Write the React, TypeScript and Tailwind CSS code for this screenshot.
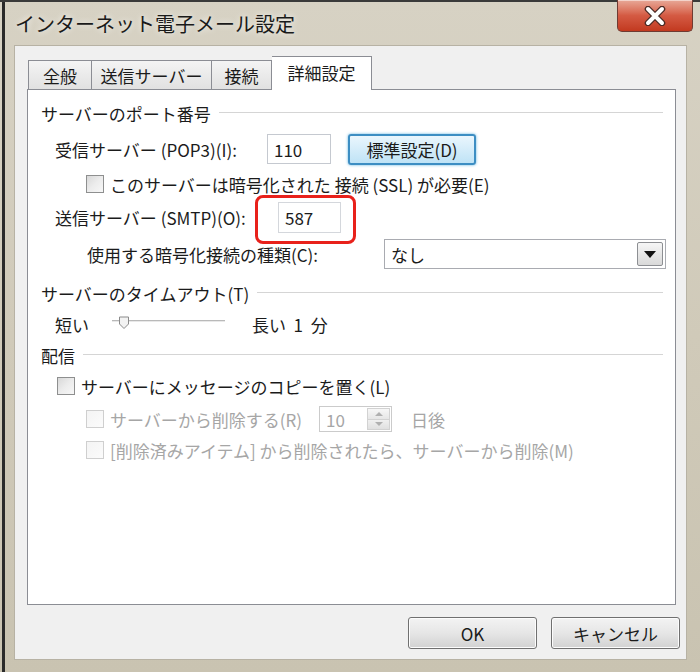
import React from "react";

const Checkbox: React.FC<{ disabled?: boolean }> = ({ disabled = false }) => (
  <span
    className={`inline-block w-[18px] h-[18px] border shrink-0 ${
      disabled
        ? "border-[#cfcfcf] bg-gradient-to-br from-[#f4f4f4] to-[#fbfbfb]"
        : "border-[#8e8f8f] bg-gradient-to-br from-[#d8d8d8] via-[#ececec] to-[#f7f7f7]"
    }`}
  />
);

const SectionHeader: React.FC<{ title: string; className?: string }> = ({ title, className = "" }) => (
  <div className={`flex items-center h-[24px] pl-[13px] pr-[12px] ${className}`}>
    <span className="whitespace-nowrap">{title}</span>
    <span className="flex-1 ml-[8px] h-[2px] border-t border-[#d5d5d5] border-b-white" />
  </div>
);

export default function App() {
  return (
    <div className="w-[700px] h-[672px] overflow-hidden bg-gradient-to-b from-[#d7d2c4] via-[#d0cab9] to-[#c9c3b1] relative font-['Meiryo_UI','Noto_Sans_CJK_JP',sans-serif] text-[#1b1b1b] text-[17px] leading-none">
      {/* left dark edge */}
      <div className="absolute left-[2px] top-0 bottom-0 w-[3px] bg-[#2a2a2a]" />
      <div className="absolute left-0 right-0 top-0 h-[2px] bg-[#3a3a3a]" />

      {/* Title bar */}
      <div className="h-[45px] flex items-center pl-[15px] pt-[2px]">
        <span className="text-[20px] text-[#1a1a1a] [text-shadow:0_0_6px_rgba(255,255,255,0.9)]">
          インターネット電子メール設定
        </span>
      </div>

      {/* Close button */}
      <div className="absolute top-0 left-[617px] w-[76px] h-[32px] rounded-b-[5px] border border-[#6e3b33] border-t-0 bg-gradient-to-b from-[#e7a898] via-[#d45a43] to-[#c2391f] flex items-center justify-center shadow-[inset_0_1px_0_rgba(255,255,255,0.5)]">
        <svg width="24" height="20" viewBox="0 0 24 20">
          <path d="M5 3 L19 17 M19 3 L5 17" stroke="#4a2a25" strokeWidth="6.5" strokeLinecap="round" />
          <path d="M5 3 L19 17 M19 3 L5 17" stroke="#ffffff" strokeWidth="4" strokeLinecap="round" />
        </svg>
      </div>

      {/* Client area */}
      <div className="ml-[14px] mr-[13px] h-[615px] bg-[#f0f0f0] border border-[#b7b2a4] flex flex-col">
        {/* Tabs */}
        <div className="flex items-end pl-[13px] mt-[10px] h-[33px] relative z-10">
          <div className="w-[64px] h-[29px] border border-[#8b8d94] border-b-0 bg-gradient-to-b from-[#f4f4f4] to-[#e1e1e1] flex items-center justify-center">
            全般
          </div>
          <div className="w-[120px] h-[29px] border border-[#8b8d94] border-b-0 border-l-0 bg-gradient-to-b from-[#f4f4f4] to-[#e1e1e1] flex items-center justify-center">
            送信サーバー
          </div>
          <div className="w-[60px] h-[29px] border border-[#8b8d94] border-b-0 border-l-0 bg-gradient-to-b from-[#f4f4f4] to-[#e1e1e1] flex items-center justify-center">
            接続
          </div>
          <div className="w-[100px] h-[34px] -mb-[1px] border border-[#8b8d94] border-b-0 border-l-0 bg-white flex items-center justify-center pb-[3px]">
            詳細設定
          </div>
        </div>

        {/* Tab panel */}
        <div className="ml-[12px] mr-[10px] h-[516px] bg-white border border-[#8b8d94] relative">
          <SectionHeader title="サーバーのポート番号" className="mt-[11px]" />

          {/* POP3 */}
          <div className="flex items-center h-[32px] mt-[8px] pl-[27px]">
            <span className="w-[212px] whitespace-nowrap">受信サーバー (POP3)(I):</span>
            <div className="w-[64px] h-[30px] border border-[#c5c9d0] bg-white flex items-center pl-[6px]">110</div>
            <div className="ml-[17px] w-[128px] h-[31px] rounded-[3px] border-2 border-[#3d8ec3] bg-gradient-to-b from-[#eaf6fd] to-[#bfe3f6] shadow-[0_0_3px_#5fb2e0] flex items-center justify-center">
              標準設定(D)
            </div>
          </div>

          {/* SSL */}
          <div className="flex items-center h-[24px] mt-[7px] pl-[58px] gap-[6px]">
            <Checkbox />
            <span className="whitespace-nowrap">このサーバーは暗号化された 接続 (SSL) が必要(E)</span>
          </div>

          {/* SMTP */}
          <div className="flex items-center h-[31px] mt-[6px] pl-[27px]">
            <span className="w-[223px] whitespace-nowrap">送信サーバー (SMTP)(O):</span>
            <div className="w-[63px] h-[31px] border border-[#d4d7dc] bg-white flex items-center pl-[6px]">587</div>
          </div>
          <div className="absolute left-[227px] top-[105px] w-[101px] h-[49px] border-[3px] border-[#e8211b] rounded-[8px]" />

          {/* Encryption type */}
          <div className="flex items-center h-[30px] mt-[6px] pl-[59px]">
            <span className="w-[297px] whitespace-nowrap">使用する暗号化接続の種類(C):</span>
            <div className="w-[282px] h-[30px] border border-[#a9abb1] bg-white flex items-center justify-between pl-[6px] pr-[2px]">
              <span>なし</span>
              <div className="w-[26px] h-[24px] border border-[#8d8f93] rounded-[2px] bg-gradient-to-b from-[#f6f6f6] to-[#d9d9d9] flex items-center justify-center">
                <svg width="12" height="7" viewBox="0 0 12 7">
                  <path d="M0 0 H12 L6 7 Z" fill="#111" />
                </svg>
              </div>
            </div>
          </div>

          <SectionHeader title="サーバーのタイムアウト(T)" className="mt-[12px]" />

          {/* Timeout slider */}
          <div className="flex items-center h-[24px] mt-[7px] pl-[27px]">
            <span className="w-[57px]">短い</span>
            <div className="relative w-[113px] h-[24px]">
              <div className="absolute left-0 right-0 top-[8px] h-[3px] border-t border-[#b9b9b9] bg-[#e8e8e8] border-b border-b-white" />
              <svg className="absolute left-[6px] top-[4px]" width="12" height="14" viewBox="0 0 12 14">
                <path d="M1.5 1 H10.5 V8 L6 12.5 L1.5 8 Z" fill="#f3f3f3" stroke="#8b8b8b" strokeWidth="1" />
              </svg>
            </div>
            <span className="ml-[27px] whitespace-nowrap">長い&nbsp;&nbsp;1&nbsp;&nbsp;分</span>
          </div>

          <SectionHeader title="配信" className="mt-[7px]" />

          {/* Leave copy */}
          <div className="flex items-center h-[24px] mt-[7px] pl-[29px] gap-[6px]">
            <Checkbox />
            <span className="whitespace-nowrap">サーバーにメッセージのコピーを置く(L)</span>
          </div>

          {/* Remove after */}
          <div className="flex items-center h-[26px] mt-[8px] pl-[58px] text-[#a6a6a6]">
            <Checkbox disabled />
            <span className="ml-[6px] w-[209px] whitespace-nowrap">サーバーから削除する(R)</span>
            <div className="w-[73px] h-[26px] border border-[#cbcbcb] bg-white flex items-center justify-between pl-[6px] pr-[1px]">
              <span>10</span>
              <div className="w-[23px] h-[22px] border border-[#d2d2d2] flex flex-col">
                <div className="flex-1 bg-gradient-to-b from-[#f7f7f7] to-[#e6e6e6] flex items-center justify-center border-b border-[#d2d2d2]">
                  <svg width="8" height="4" viewBox="0 0 8 4"><path d="M0 4 L4 0 L8 4 Z" fill="#b0b0b0" /></svg>
                </div>
                <div className="flex-1 bg-gradient-to-b from-[#f0f0f0] to-[#e0e0e0] flex items-center justify-center">
                  <svg width="8" height="4" viewBox="0 0 8 4"><path d="M0 0 L8 0 L4 4 Z" fill="#b0b0b0" /></svg>
                </div>
              </div>
            </div>
            <span className="ml-[19px]">日後</span>
          </div>

          {/* Remove when deleted */}
          <div className="flex items-center h-[24px] mt-[6px] pl-[58px] gap-[6px] text-[#a6a6a6]">
            <Checkbox disabled />
            <span className="whitespace-nowrap">[削除済みアイテム] から削除されたら、サーバーから削除(M)</span>
          </div>
        </div>

        {/* Buttons */}
        <div className="flex justify-end gap-[14px] mt-[12px] pr-[6px]">
          <div className="w-[129px] h-[32px] rounded-[3px] border border-[#707070] bg-gradient-to-b from-[#f3f3f3] via-[#e6e6e6] to-[#d2d2d2] shadow-[inset_0_0_0_1px_#fcfcfc] flex items-center justify-center">
            OK
          </div>
          <div className="w-[129px] h-[32px] rounded-[3px] border border-[#707070] bg-gradient-to-b from-[#f3f3f3] via-[#e6e6e6] to-[#d2d2d2] shadow-[inset_0_0_0_1px_#fcfcfc] flex items-center justify-center">
            キャンセル
          </div>
        </div>
      </div>
    </div>
  );
}
